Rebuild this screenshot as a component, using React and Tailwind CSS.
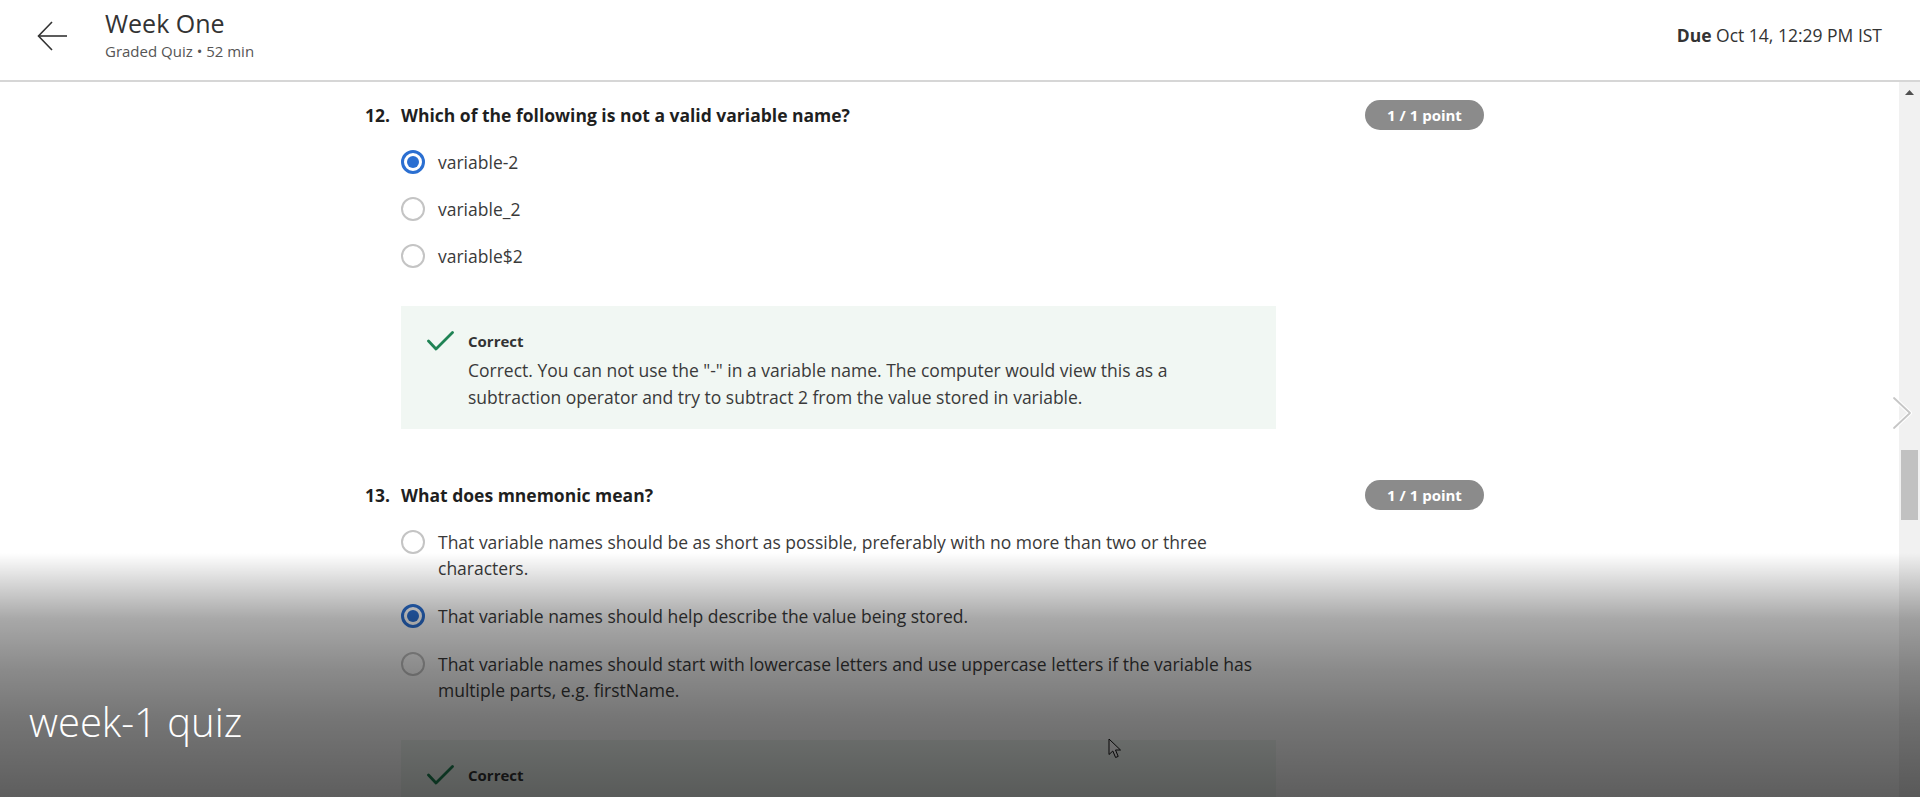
import React from "react";

function Radio({ selected }) {
  if (selected) {
    return (
      <span className="w-6 h-6 rounded-full border-[3px] border-[#2b6fd1] bg-white flex items-center justify-center">
        <span className="w-3 h-3 rounded-full bg-[#2b6fd1]" />
      </span>
    );
  }
  return <span className="w-6 h-6 rounded-full border-2 border-[#c4c4c4] bg-white" />;
}

function Option({ selected, children }) {
  return (
    <div className="flex items-start gap-[13px]">
      <div className="h-[26px] flex items-center shrink-0">
        <Radio selected={selected} />
      </div>
      <div className="text-[17.5px] leading-[26px] text-[#3a3a3a]">{children}</div>
    </div>
  );
}

function Check() {
  return (
    <svg width="27" height="20" viewBox="0 0 27 20" fill="none">
      <polyline points="1.5,10 9,18 25.5,1.5" stroke="#1f8354" strokeWidth="2.8" strokeLinecap="round" strokeLinejoin="round" />
    </svg>
  );
}

function Feedback({ children, className }) {
  return (
    <div className={"w-[875px] bg-[#f1f7f3] pt-[25px] pb-[18px] pl-[26px] flex " + (className || "")}>
      <div className="w-[41px] shrink-0">
        <Check />
      </div>
      <div>
        <div className="text-[15px] leading-[20px] font-bold text-[#333]">Correct</div>
        {children ? (
          <div className="mt-[6px] max-w-[745px] text-[17.5px] leading-[27px] text-[#3a3a3a]">{children}</div>
        ) : null}
      </div>
    </div>
  );
}

function Question({ num, text, children }) {
  return (
    <div className="w-[1119px]">
      <div className="flex items-center justify-between h-[30px]">
        <div className="flex text-[17.5px] font-bold leading-[30px] text-[#1f1f1f]">
          <span className="w-[36px]">{num}</span>
          <span>{text}</span>
        </div>
        <span className="h-[30px] w-[119px] rounded-full bg-[#8b8b8b] text-white text-[15px] font-bold flex items-center justify-center">
          1 / 1 point
        </span>
      </div>
      <div className="pl-[36px] w-[912px]">{children}</div>
    </div>
  );
}

export default function App() {
  return (
    <div className="relative w-[1920px] h-[797px] overflow-hidden bg-white font-['Open_Sans',sans-serif] text-[#333]">
      <header className="h-[82px] border-b-2 border-[#d6d6d6] flex items-start pl-[37px] pr-[38px]">
        <svg className="mt-[21px] shrink-0" width="31" height="30" viewBox="0 0 31 30" fill="none">
          <line x1="1.5" y1="15" x2="30" y2="15" stroke="#333" strokeWidth="1.6" />
          <polyline points="15,1 1.5,15 15,29" stroke="#333" strokeWidth="1.6" fill="none" />
        </svg>
        <div className="ml-[37px] mt-[8px] flex flex-col">
          <div className="text-[25px] leading-[30px] text-[#333]">Week One</div>
          <div className="text-[15px] leading-[20px] text-[#555] mt-[3px]">Graded Quiz • 52 min</div>
        </div>
        <div className="ml-auto mt-[23px] text-[17.5px] leading-[24px] text-[#333]">
          <span className="font-bold">Due</span> Oct 14, 12:29 PM IST
        </div>
      </header>

      <div className="flex h-[715px]">
        <main className="flex-1 overflow-hidden pl-[365px] pt-[18px]">
          <Question num="12." text="Which of the following is not a valid variable name?">
            <div className="mt-[19px] flex flex-col gap-[21px]">
              <Option selected>variable-2</Option>
              <Option>variable_2</Option>
              <Option>variable$2</Option>
            </div>
            <Feedback className="mt-[37px]">
              Correct. You can not use the "-" in a variable name. The computer would view this as a subtraction operator and try to subtract 2 from the value stored in variable.
            </Feedback>
          </Question>

          <div className="mt-[51px]">
            <Question num="13." text="What does mnemonic mean?">
              <div className="mt-[19px] flex flex-col gap-[22px]">
                <Option>That variable names should be as short as possible, preferably with no more than two or three characters.</Option>
                <Option selected>That variable names should help describe the value being stored.</Option>
                <Option>That variable names should start with lowercase letters and use uppercase letters if the variable has multiple parts, e.g. firstName.</Option>
              </div>
              <Feedback className="mt-[37px] h-[140px]" />
            </Question>
          </div>
        </main>

        <div className="w-[21px] bg-[#f1f1f1] flex flex-col items-center shrink-0">
          <div className="h-[21px] flex items-center justify-center">
            <svg width="9" height="5" viewBox="0 0 9 5">
              <polygon points="4.5,0 9,5 0,5" fill="#505050" />
            </svg>
          </div>
          <div className="mt-[347px] w-[17px] h-[70px] bg-[#c1c1c1]" />
        </div>
      </div>

      {/* next chevron over content */}
      <svg className="absolute left-[1891px] top-[396px]" width="22" height="34" viewBox="0 0 22 34" fill="none">
        <polyline points="3,2 19,17 3,32" stroke="#ffffff" strokeWidth="4" strokeLinecap="round" strokeLinejoin="round" />
        <polyline points="3,2 19,17 3,32" stroke="#c6c6c6" strokeWidth="1.8" strokeLinecap="round" strokeLinejoin="round" />
      </svg>

      {/* mouse cursor */}
      <svg className="absolute left-[1108px] top-[738px]" width="16" height="22" viewBox="0 0 16 22" fill="none">
        <path d="M1 1 L1 16.5 L4.8 13 L7.6 19.5 L10.2 18.4 L7.5 12 L12.5 12 Z" fill="#ffffff" stroke="#111" strokeWidth="1" strokeLinejoin="round" />
      </svg>

      {/* video overlay gradient */}
      <div className="absolute left-0 right-0 bottom-0 h-[244px] pointer-events-none bg-[linear-gradient(to_bottom,rgba(0,0,0,0)_0%,rgba(0,0,0,0.14)_11%,rgba(0,0,0,0.34)_27%,rgba(0,0,0,0.46)_48%,rgba(0,0,0,0.54)_68%,rgba(0,0,0,0.63)_100%)]" />

      <div className="absolute left-[29px] top-[697px] text-[40px] leading-[50px] font-light text-white">
        week-1 quiz
      </div>
    </div>
  );
}
